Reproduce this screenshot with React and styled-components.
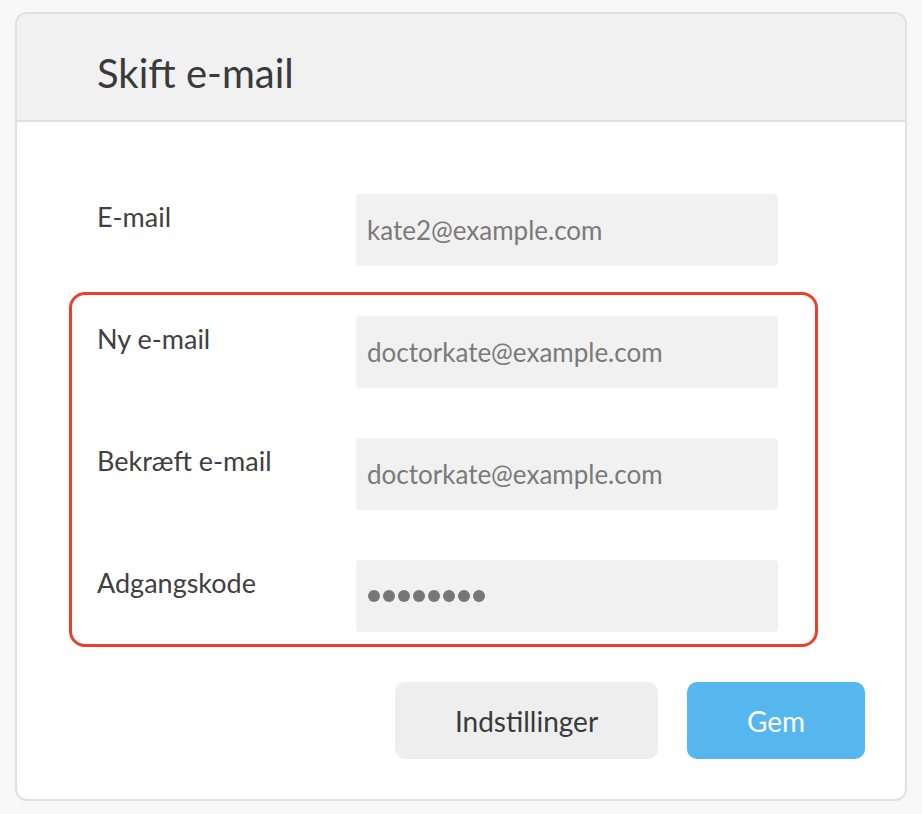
import React from 'react';
import styled, { createGlobalStyle } from 'styled-components';

const GlobalStyle = createGlobalStyle`
    html, body {
        margin: 0;
        background: #f8f8f8;
        font-family: "Lato", "Liberation Sans", sans-serif;
    }
`;

const Page = styled.div`
    padding: 12px 15px 12px 15px;
`;

const Card = styled.div`
    background: #ffffff;
    border: 2px solid #e0e0e0;
    border-radius: 12px;
    overflow: hidden;
    width: 892px;
    box-sizing: border-box;
`;

const Header = styled.div`
    background: #f1f1f1;
    border-bottom: 2px solid #e0e0e0;
    height: 108px;
    box-sizing: border-box;
    display: flex;
    align-items: center;
    padding: 11px 0 0 80px;
`;

const Title = styled.h1`
    margin: 0;
    font-size: 40px;
    font-weight: 400;
    color: #3a3a3a;
`;

const Body = styled.div`
    padding: 72px 40px 40px 80px;
    display: flex;
    flex-direction: column;
`;

const Row = styled.div`
    display: grid;
    grid-template-columns: 259px 422px;
    align-items: start;
`;

const Label = styled.label`
    font-size: 27px;
    color: #404040;
    padding-top: 7px;
    line-height: 1.2;
`;

const Input = styled.input`
    height: 72px;
    box-sizing: border-box;
    border: none;
    border-radius: 4px;
    background: #f1f1f1;
    padding: 0 11px;
    font-family: inherit;
    font-size: 26px;
    color: #777;
    outline: none;

    &::placeholder {
        color: #7a7a7a;
    }
`;

const Dots = styled.div`
    height: 72px;
    box-sizing: border-box;
    border-radius: 4px;
    background: #f1f1f1;
    padding: 0 12px;
    display: flex;
    align-items: center;
    gap: 3px;
`;

const Dot = styled.span`
    width: 12px;
    height: 12px;
    border-radius: 50%;
    background: #777;
`;

const Highlight = styled.div`
    margin: 26px 0 0 -28px;
    width: 749px;
    box-sizing: border-box;
    border: 3px solid #e8402a;
    border-radius: 16px;
    padding: 21px 37px 12px 25px;
    display: flex;
    flex-direction: column;
    gap: 50px;
`;

const Actions = styled.div`
    display: flex;
    justify-content: flex-end;
    gap: 29px;
    margin-top: 35px;
`;

const Button = styled.button`
    height: 77px;
    border: none;
    border-radius: 10px;
    font-family: inherit;
    font-size: 28px;
    width: ${p => p.$width}px;
    background: ${p => (p.$primary ? '#55b7ee' : '#eeeeee')};
    color: ${p => (p.$primary ? '#ffffff' : '#3a3a3a')};
    cursor: pointer;
`;

const fields = [
    { label: 'Ny e-mail', value: 'doctorkate@example.com' },
    { label: 'Bekræft e-mail', value: 'doctorkate@example.com' },
];

const App = () => {
    return (
        <Page>
            <GlobalStyle />
            <Card>
                <Header>
                    <Title>Skift e-mail</Title>
                </Header>
                <Body>
                    <Row>
                        <Label>E-mail</Label>
                        <Input placeholder="kate2@example.com" />
                    </Row>
                    <Highlight>
                        {fields.map(f => (
                            <Row key={f.label}>
                                <Label>{f.label}</Label>
                                <Input placeholder={f.value} />
                            </Row>
                        ))}
                        <Row>
                            <Label>Adgangskode</Label>
                            <Dots>
                                {Array.from({ length: 8 }).map((_, i) => <Dot key={i} />)}
                            </Dots>
                        </Row>
                    </Highlight>
                    <Actions>
                        <Button $width={263}>Indstillinger</Button>
                        <Button $primary $width={178}>Gem</Button>
                    </Actions>
                </Body>
            </Card>
        </Page>
    );
};

export default App;
